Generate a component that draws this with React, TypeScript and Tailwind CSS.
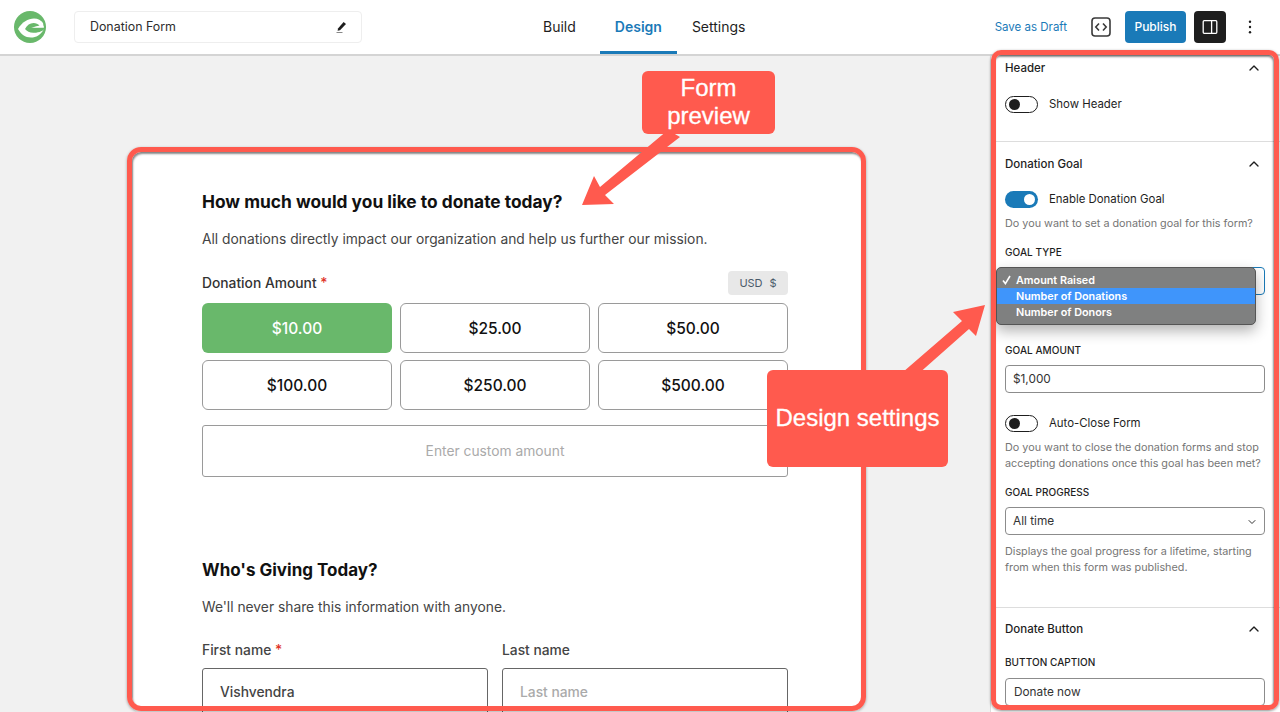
import React from 'react'
import { ChevronUp, ChevronDown } from 'lucide-react'

const red = 'bg-[#ff5a4e]'

function Logo() {
  return (
    <svg width="32" height="32" viewBox="0 0 32 32">
      <circle cx="16" cy="16" r="16" fill="#69b86b" />
      <path d="M4 18 C8 11 14 7.5 20 7.5 C24 7.5 27 9.5 29 12 L30 18 C27 24 22 26.5 17 26.5 C11 26.5 7 23 4 18 Z" fill="#fff" />
      <path d="M11 18 C13 14 16 12 19.5 12 C22 12 24 13 25.5 14.5 L18 16.5 L32 16.5 C29 20 26 21.5 20 21.8 C16 22 13 20.5 11 18 Z" fill="#69b86b" />
      <path d="M17 16.8 L29 14.6 L30 16.6 Z" fill="#fff" />
    </svg>
  )
}

function Toggle({ on = false }: { on?: boolean }) {
  if (on) {
    return (
      <span className="flex h-[17px] w-[33px] shrink-0 items-center justify-end rounded-full bg-[#1a7ab8] pr-[3px]">
        <span className="h-[11px] w-[11px] rounded-full bg-white" />
      </span>
    )
  }
  return (
    <span className="flex h-[17px] w-[33px] shrink-0 items-center rounded-full border border-[#1e1e1e] bg-white pl-[3px]">
      <span className="h-[11px] w-[11px] rounded-full bg-[#1e1e1e]" />
    </span>
  )
}

function PanelTitle({ children }: { children: React.ReactNode }) {
  return (
    <div className="flex items-center justify-between pr-[3px] text-[11.5px] font-medium leading-4 text-[#1e1e1e]">
      <span>{children}</span>
      <ChevronUp size={16} strokeWidth={2} />
    </div>
  )
}

function FieldLabel({ children, className }: { children: React.ReactNode; className: string }) {
  return <div className={`text-[10px] font-medium uppercase leading-4 tracking-[0.05px] text-[#1e1e1e] ${className}`}>{children}</div>
}

function Help({ children, className }: { children: React.ReactNode; className: string }) {
  return <p className={`text-[10.8px] leading-4 text-[#757575] ${className}`}>{children}</p>
}

function Amount({ value, active = false }: { value: string; active?: boolean }) {
  if (active) {
    return <div className="flex h-[50px] items-center justify-center rounded-md bg-[#69b86b] pt-px text-[15.5px] font-medium text-white">{value}</div>
  }
  return <div className="flex h-[50px] items-center justify-center rounded-md border border-[#9a9a9a] pt-px text-[15.5px] font-medium text-[#111]">{value}</div>
}

function Header() {
  return (
    <header className="flex h-[56px] shrink-0 items-center border-b-2 border-[#d4d4d4] bg-white pl-[14px] pr-[22px]">
      <Logo />
      <div className="ml-7 flex h-8 w-[288px] items-center justify-between rounded-sm border border-[#eeeeee] pl-[15px] pr-[14px] pt-px text-[12.4px] text-[#2c2c2c]">
        <span>Donation Form</span>
        <svg width="12" height="13" viewBox="0 0 12 13" fill="#1e1e1e">
          <path d="M8.6 1 L11 3 L5 9.2 L2.6 9.8 L3 7.4 Z" />
          <rect x="1.5" y="11" width="6" height="1" fill="#888" />
        </svg>
      </div>
      <nav className="ml-[166px] flex h-[54px] items-center text-sm text-[#1e1e1e]">
        <span className="px-[15px]">Build</span>
        <span className="ml-[9px] flex h-full items-center border-b-[3px] border-[#1a7ab8] px-[15px] pt-[3px] font-semibold text-[#1a7ab8]">Design</span>
        <span className="px-[15px]">Settings</span>
      </nav>
      <div className="ml-auto flex items-center">
        <span className="mt-px text-[11.5px] text-[#1a7ab8]">Save as Draft</span>
        <svg className="ml-[24px]" width="20" height="20" viewBox="0 0 20 20" fill="none" stroke="#3a3a3a">
          <rect x="1" y="1" width="18" height="18" rx="3" strokeWidth="1.6" />
          <path d="M8 6.5 L4.8 10 L8 13.5 M12 6.5 L15.2 10 L12 13.5" strokeWidth="1.6" />
        </svg>
        <span className="ml-[14px] flex h-8 w-[61px] items-center justify-center rounded-sm bg-[#1a7ab8] text-xs font-medium text-white">Publish</span>
        <span className="ml-2 flex h-8 w-8 items-center justify-center rounded-sm bg-[#1e1e1e]">
          <svg width="16" height="16" viewBox="0 0 16 16" fill="none" stroke="#fff" strokeWidth="1.3">
            <rect x="1.2" y="1.7" width="13.6" height="12.6" rx="1" />
            <path d="M9.6 1.7 V14.3" />
          </svg>
        </span>
        <svg className="ml-[16px]" width="16" height="16" viewBox="0 0 16 16" fill="#1e1e1e">
          <circle cx="8" cy="2.8" r="1.2" />
          <circle cx="8" cy="8" r="1.2" />
          <circle cx="8" cy="13.2" r="1.2" />
        </svg>
      </div>
    </header>
  )
}

function FormCard() {
  return (
    <div className="h-[560px] w-[728px] overflow-hidden rounded-lg bg-white pl-[69px] pr-[73px] pt-[37px]">
      <h2 className="text-[17.35px] font-bold leading-6 text-[#111]">How much would you like to donate today?</h2>
      <p className="mt-[13px] text-[13.8px] leading-6 text-[#444]">All donations directly impact our organization and help us further our mission.</p>
      <div className="mt-[20px] flex h-6 items-center justify-between">
        <span className="text-[13.8px] font-medium text-[#333]">Donation Amount <span className="text-[#e0301e]">*</span></span>
        <span className="flex h-6 w-[60px] items-center justify-center gap-[7px] rounded bg-[#e8e8e8] text-[11px] text-[#4a5a6a]"><span>USD</span><span>$</span></span>
      </div>
      <div className="mt-2 grid grid-cols-3 gap-x-2 gap-y-[7px]">
        <Amount value="$10.00" active />
        <Amount value="$25.00" />
        <Amount value="$50.00" />
        <Amount value="$100.00" />
        <Amount value="$250.00" />
        <Amount value="$500.00" />
      </div>
      <div className="mt-[15px] flex h-[52px] items-center justify-center rounded-[3px] border border-[#9a9a9a] text-[13.8px] text-[#aaa]">Enter custom amount</div>
      <h2 className="mt-[81px] text-[17px] font-bold leading-6 text-[#111]">Who's Giving Today?</h2>
      <p className="mt-[13px] text-[13.8px] leading-6 text-[#444]">We'll never share this information with anyone.</p>
      <div className="mt-[19px] grid grid-cols-[286px_286px] gap-x-[14px]">
        <div>
          <div className="text-[13.8px] font-medium leading-6 text-[#444]">First name <span className="text-[#e0301e]">*</span></div>
          <div className="mt-[6px] flex h-[50px] items-center rounded-[3px] border border-[#666] pb-[2px] pl-[17px] text-[13.8px] font-medium text-[#444]">Vishvendra</div>
        </div>
        <div>
          <div className="text-[13.8px] font-medium leading-6 text-[#444]">Last name</div>
          <div className="mt-[6px] flex h-[50px] items-center rounded-[3px] border border-[#666] pb-[2px] pl-[17px] text-[13.8px] font-medium text-[#aaa]">Last name</div>
        </div>
      </div>
    </div>
  )
}

function Sidebar() {
  return (
    <aside className="h-full w-[290px] shrink-0 overflow-hidden border-l border-[#dddddd] bg-white">
      <section className="h-[86px] border-b border-[#dddddd] pl-[14px] pr-[15px] pt-[4px]">
        <PanelTitle>Header</PanelTitle>
        <div className="mt-[20px] flex items-center gap-[11px] text-[11.4px] text-[#1e1e1e]"><Toggle /><span>Show Header</span></div>
      </section>
      <section className="relative h-[466px] border-b border-[#dddddd] pl-[14px] pr-[15px] pt-[14px]">
        <PanelTitle>Donation Goal</PanelTitle>
        <div className="mt-[19px] flex items-center gap-[11px] text-[11.4px] text-[#1e1e1e]"><Toggle on /><span>Enable Donation Goal</span></div>
        <Help className="mt-[8px]">Do you want to set a donation goal for this form?</Help>
        <FieldLabel className="mt-[12px]">Goal type</FieldLabel>
        <div className="mt-[7px] flex h-[28px] items-center justify-end rounded-sm border border-[#1a7ab8] pr-[6px]"><ChevronDown size={12} /></div>
        <FieldLabel className="mt-[47px]">Goal amount</FieldLabel>
        <div className="mt-[7px] flex h-[28px] items-center rounded-sm border border-[#8c8c8c] pl-[7px] pt-[2px] text-[11.8px] text-[#333]">$1,000</div>
        <div className="mt-[22px] flex items-center gap-[11px] text-[11.4px] text-[#1e1e1e]"><Toggle /><span>Auto-Close Form</span></div>
        <Help className="mt-[8px]">Do you want to close the donation forms and stop accepting donations once this goal has been met?</Help>
        <FieldLabel className="mt-[12px]">Goal progress</FieldLabel>
        <div className="mt-[7px] flex h-[28px] items-center justify-between rounded-sm border border-[#8c8c8c] pl-[7px] pr-[6px] pt-[2px] text-[11.8px] text-[#333]"><span>All time</span><ChevronDown size={12} /></div>
        <Help className="mt-[9px]">Displays the goal progress for a lifetime, starting from when this form was published.</Help>
        <div className="absolute left-[5px] top-[125px] flex h-[58px] w-[260px] flex-col justify-center rounded-[5px] border border-[#555] bg-[#7f8080] text-[10.8px] font-semibold text-white shadow-[0_6px_14px_rgba(0,0,0,0.3)]">
          <div className="flex h-4 items-center leading-[17px]">
            <span className="flex w-[19px] justify-center">
              <svg width="9" height="10" viewBox="0 0 9 10" fill="none" stroke="#fff" strokeWidth="1.6"><path d="M1 5.5 L3.4 8.6 L8 1" /></svg>
            </span>
            Amount Raised
          </div>
          <div className="flex h-4 items-center bg-[#3f95fb] leading-[17px]"><span className="w-[19px]" />Number of Donations</div>
          <div className="flex h-4 items-center leading-[17px]"><span className="w-[19px]" />Number of Donors</div>
        </div>
      </section>
      <section className="pl-[14px] pr-[15px] pt-[13px]">
        <PanelTitle>Donate Button</PanelTitle>
        <FieldLabel className="mt-[17px]">Button caption</FieldLabel>
        <div className="mt-[8px] flex h-[28px] items-center rounded-sm border border-[#8c8c8c] pl-[8px] pt-[2px] text-[11.8px] text-[#333]">Donate now</div>
      </section>
    </aside>
  )
}

function Annotations() {
  return (
    <>
      <div className="absolute left-[127px] top-[147px] h-[564px] w-[739px] rounded-[14px] border-[5px] border-[#ff5a4e] shadow-[inset_1px_2px_2px_rgba(0,0,0,0.45),0_1px_3px_rgba(0,0,0,0.35)]" />
      <div className="absolute left-[991px] top-[50px] h-[660px] w-[288px] rounded-[10px] border-[5px] border-[#ff5a4e] shadow-[inset_-1px_2px_2px_rgba(0,0,0,0.45),0_1px_3px_rgba(0,0,0,0.45)]" />
      <svg className="absolute left-0 top-0" width="1280" height="712" fill="#ff5a4e">
        <path d="M668 130 L680 137 L605 195 L614 204 L582 205 L594 176 L600 187 Z" />
        <path d="M903 372 L962 321 L953 312 L985 305 L976 336 L969 329 L917 375 Z" />
      </svg>
      <div className={`absolute left-[642px] top-[71px] flex h-[63px] w-[133px] items-center justify-center rounded-md ${red} pb-[2px] text-center font-['Liberation_Sans',sans-serif] text-[24px] leading-[28px] text-white [-webkit-text-stroke:0.3px_white]`}>Form<br />preview</div>
      <div className={`absolute left-[767px] top-[370px] flex h-[97px] w-[181px] items-center justify-center rounded-md ${red} pb-[2px] font-['Liberation_Sans',sans-serif] text-[24px] text-white [-webkit-text-stroke:0.3px_white]`}>Design settings</div>
    </>
  )
}

export default function App() {
  return (
    <div className="relative flex h-[712px] w-[1280px] flex-col overflow-hidden bg-[#f1f1f1] font-['Inter',sans-serif]">
      <Header />
      <div className="flex min-h-0 flex-1">
        <main className="min-w-0 flex-1 pl-[133px] pt-[97px]">
          <FormCard />
        </main>
        <Sidebar />
      </div>
      <Annotations />
    </div>
  )
}
